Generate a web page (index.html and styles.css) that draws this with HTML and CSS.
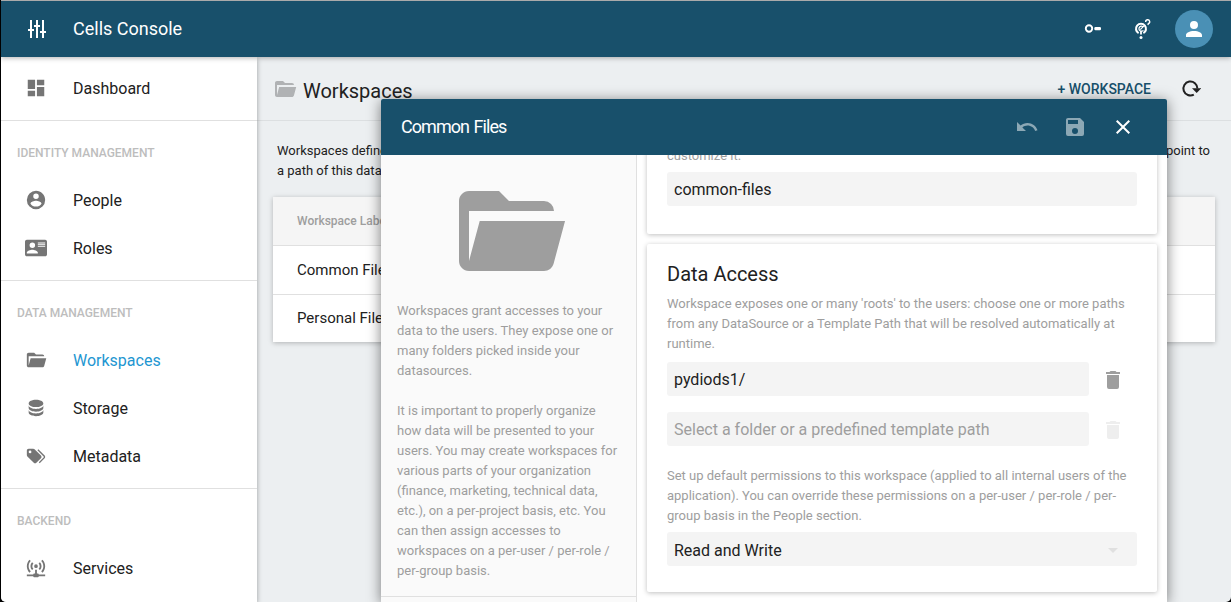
FILE: index.html
```html
<!DOCTYPE html>
<html lang="en">
<head>
<meta charset="utf-8">
<title>Cells Console</title>
<link rel="stylesheet" href="styles.css">
</head>
<body>
<svg class="defs" aria-hidden="true">
  <symbol id="folder" viewBox="0 0 24 24"><path d="M19,20H4C2.89,20 2,19.1 2,18V6C2,4.89 2.89,4 4,4H10L12,6H19A2,2 0 0,1 21,8H21L4,8V18L6.14,10H23.21L20.93,18.5C20.7,19.37 19.92,20 19,20Z"/></symbol>
  <symbol id="trash" viewBox="0 0 24 24"><path d="M19,4H15.5L14.5,3H9.5L8.5,4H5V6H19M6,19A2,2 0 0,0 8,21H16A2,2 0 0,0 18,19V7H6V19Z"/></symbol>
</svg>
<div class="window">
  <header class="topbar">
    <svg class="icon tune" viewBox="0 0 24 24"><path d="M5,3V12H3V14H5V21H7V14H9V12H7V3M11,3V8H9V10H11V21H13V10H15V8H13V3M17,3V14H15V16H17V21H19V16H21V14H19V3"/></svg>
    <span class="brand">Cells Console</span>
    <svg class="icon key" viewBox="0 0 18 18"><circle cx="5" cy="8.5" r="3.2" fill="none" stroke="#fff" stroke-width="1.9"/><rect x="10.3" y="7" width="6.7" height="3.2" rx="1.2"/></svg>
    <svg class="icon compass" viewBox="0 0 18 22"><g fill="none" stroke="#fff"><path d="M5.6 15.2A5 5 0 1 1 10.4 15.2" stroke-width="2.1"/><path d="M10.2 8.9A2.5 2.5 0 1 0 10.4 12.3M7.3 11.6L11 7.8" stroke-width="1.2"/><path d="M8 13V16.6" stroke-width="1.8"/><path d="M12.7 4A2 2 0 1 1 15.4 5.6L14.8 6.9" stroke-width="1.4"/></g><circle cx="8" cy="19.4" r="1.5"/></svg>
    <span class="avatar"><svg class="icon" viewBox="0 0 24 24"><path d="M12,4A4,4 0 0,1 16,8A4,4 0 0,1 12,12A4,4 0 0,1 8,8A4,4 0 0,1 12,4M12,14C16.42,14 20,15.79 20,18V20H4V18C4,15.79 7.58,14 12,14Z"/></svg></span>
  </header>
  <div class="body">
    <nav class="sidebar">
      <div class="group">
        <a class="item"><svg class="icon" viewBox="0 0 24 24"><path d="M13,3V9H21V3M13,21H21V11H13M3,21H11V15H3M3,13H11V3H3V13Z"/></svg><span>Dashboard</span></a>
      </div>
      <div class="group">
        <h2 class="label">IDENTITY MANAGEMENT</h2>
        <a class="item"><svg class="icon" viewBox="0 0 24 24"><path d="M12,19.2C9.5,19.2 7.29,17.92 6,16C6.03,14 10,12.9 12,12.9C14,12.9 17.97,14 18,16C16.71,17.92 14.5,19.2 12,19.2M12,5A3,3 0 0,1 15,8A3,3 0 0,1 12,11A3,3 0 0,1 9,8A3,3 0 0,1 12,5M12,2A10,10 0 0,0 2,12A10,10 0 0,0 12,22A10,10 0 0,0 22,12C22,6.47 17.5,2 12,2Z"/></svg><span>People</span></a>
        <a class="item"><svg class="icon" viewBox="0 0 24 24"><path fill-rule="evenodd" d="M22,3H2C0.91,3.04 0.04,3.91 0,5V19C0.04,20.09 0.91,20.96 2,21H22C23.09,20.96 23.96,20.09 24,19V5C23.96,3.91 23.09,3.04 22,3ZM8,6A3,3 0 0,1 11,9A3,3 0 0,1 8,12A3,3 0 0,1 5,9A3,3 0 0,1 8,6ZM14,18H2V17C2,15 6,13.9 8,13.9C10,13.9 14,15 14,17V18ZM22,7V6H14V7ZM22,9V8H14V9ZM22,11V10H14V11Z"/></svg><span>Roles</span></a>
      </div>
      <div class="group">
        <h2 class="label">DATA MANAGEMENT</h2>
        <a class="item active"><svg class="icon"><use href="#folder"/></svg><span>Workspaces</span></a>
        <a class="item"><svg class="icon" viewBox="0 0 24 24"><path d="M12,3C7.58,3 4,4.79 4,7C4,9.21 7.58,11 12,11C16.42,11 20,9.21 20,7C20,4.79 16.42,3 12,3M4,9V12C4,14.21 7.58,16 12,16C16.42,16 20,14.21 20,12V9C20,11.21 16.42,13 12,13C7.58,13 4,11.21 4,9M4,14V17C4,19.21 7.58,21 12,21C16.42,21 20,19.21 20,17V14C20,16.21 16.42,18 12,18C7.58,18 4,16.21 4,14Z"/></svg><span>Storage</span></a>
        <a class="item"><svg class="icon" viewBox="0 0 24 24"><path d="M5.5,9A1.5,1.5 0 0,0 7,7.5A1.5,1.5 0 0,0 5.5,6A1.5,1.5 0 0,0 4,7.5A1.5,1.5 0 0,0 5.5,9M17.41,11.58C17.77,11.94 18,12.44 18,13C18,13.55 17.78,14.05 17.41,14.41L12.41,19.41C12.05,19.77 11.55,20 11,20C10.45,20 9.95,19.78 9.58,19.41L2.59,12.42C2.22,12.05 2,11.55 2,11V6C2,4.89 2.89,4 4,4H9C9.55,4 10.05,4.22 10.41,4.58L17.41,11.58M13.54,5.71L14.54,4.71L21.41,11.58C21.78,11.94 22,12.45 22,13C22,13.55 21.78,14.05 21.42,14.41L16.04,19.79L15.04,18.79L20.75,13L13.54,5.71Z"/></svg><span>Metadata</span></a>
      </div>
      <div class="group">
        <h2 class="label">BACKEND</h2>
        <a class="item"><svg class="icon" viewBox="0 0 24 24"><path d="M4.93,2.93C3.12,4.74 2,7.24 2,10C2,12.76 3.12,15.26 4.93,17.07L6.34,15.66C4.89,14.22 4,12.22 4,10C4,7.79 4.89,5.78 6.34,4.34L4.93,2.93M19.07,2.93L17.66,4.34C19.11,5.78 20,7.79 20,10C20,12.22 19.11,14.22 17.66,15.66L19.07,17.07C20.88,15.26 22,12.76 22,10C22,7.24 20.88,4.74 19.07,2.93M7.76,5.76C6.67,6.85 6,8.35 6,10C6,11.65 6.67,13.15 7.76,14.24L9.17,12.83C8.45,12.11 8,11.11 8,10C8,8.89 8.45,7.89 9.17,7.17L7.76,5.76M16.24,5.76L14.83,7.17C15.55,7.89 16,8.89 16,10C16,11.11 15.55,12.11 14.83,12.83L16.24,14.24C17.33,13.15 18,11.65 18,10C18,8.35 17.33,6.85 16.24,5.76M12,8A2,2 0 0,0 10,10A2,2 0 0,0 12,12A2,2 0 0,0 14,10A2,2 0 0,0 12,8M11,14V18H10A1,1 0 0,0 9,19H2V21H9A1,1 0 0,0 10,22H14A1,1 0 0,0 15,21H22V19H15A1,1 0 0,0 14,18H13V14H11Z"/></svg><span>Services</span></a>
      </div>
    </nav>
    <main class="main">
      <div class="page-head">
        <svg class="icon head-folder"><use href="#folder"/></svg>
        <h1 class="page-title">Workspaces</h1>
        <span class="add">+ WORKSPACE</span>
        <svg class="icon reload" viewBox="0 0 20 20"><path d="M12.8 15.6A7 7 0 1 1 16.4 9.5" fill="none" stroke="#212121" stroke-width="2"/><path d="M11 9.2H20.4L15.7 14Z"/></svg>
      </div>
      <div class="intro"><div>Workspaces define</div><div class="intro-end">point to</div><div>a path of this datasource.</div></div>
      <div class="table">
        <div class="row head">Workspace Label</div>
        <div class="row">Common Files</div>
        <div class="row">Personal Files</div>
      </div>
    </main>
  </div>
  <section class="dialog">
    <header class="dialog-bar">
      <h2 class="dialog-title">Common Files</h2>
      <svg class="icon dim" viewBox="0 0 24 24"><path d="M12.5,8C9.85,8 7.45,9 5.6,10.6L2,7V16H11L7.38,12.38C8.77,11.22 10.54,10.5 12.5,10.5C16.04,10.5 19.1,12.81 20.14,16L22.5,15.22C21.12,11.03 17.15,8 12.5,8Z"/></svg>
      <svg class="icon dim" viewBox="0 0 24 24"><path d="M15,9H5V5H15M12,19A3,3 0 0,1 9,16A3,3 0 0,1 12,13A3,3 0 0,1 15,16A3,3 0 0,1 12,19M17,3H5C3.89,3 3,3.9 3,5V19A2,2 0 0,0 5,21H19A2,2 0 0,0 21,19V7L17,3Z"/></svg>
      <svg class="icon" viewBox="0 0 24 24"><path d="M19,6.41L17.59,5L12,10.59L6.41,5L5,6.41L10.59,12L5,17.59L6.41,19L12,13.41L17.59,19L19,17.59L13.41,12L19,6.41Z"/></svg>
    </header>
    <div class="dialog-body">
      <aside class="info">
        <svg class="icon big"><use href="#folder"/></svg>
        <div class="info-text">
          <p>Workspaces grant accesses to your<br>data to the users. They expose one or<br>many folders picked inside your<br>datasources.</p>
          <p>It is important to properly organize<br>how data will be presented to your<br>users. You may create workspaces for<br>various parts of your organization<br>(finance, marketing, technical data,<br>etc.), on a per-project basis, etc. You<br>can then assign accesses to<br>workspaces on a per-user / per-role /<br>per-group basis.</p>
        </div>
      </aside>
      <div class="form">
        <div class="card first">
          <p class="hint">customize it.</p>
          <div class="field">common-files</div>
        </div>
        <div class="card">
          <h3 class="card-title">Data Access</h3>
          <p class="hint">Workspace exposes one or many 'roots' to the users: choose one or more paths<br>from any DataSource or a Template Path that will be resolved automatically at<br>runtime.</p>
          <div class="line"><div class="field">pydiods1/</div><svg class="icon trash"><use href="#trash"/></svg></div>
          <div class="line"><div class="field empty">Select a folder or a predefined template path</div><svg class="icon trash off"><use href="#trash"/></svg></div>
          <p class="hint perms">Set up default permissions to this workspace (applied to all internal users of the<br>application). You can override these permissions on a per-user / per-role / per-<br>group basis in the People section.</p>
          <div class="field select"><span>Read and Write</span><svg class="icon caret" viewBox="0 0 24 24"><path d="M7,10L12,15L17,10Z"/></svg></div>
        </div>
      </div>
    </div>
  </section>
</div>
</body>
</html>
```
FILE: styles.css
```css
* { box-sizing: border-box; }
body { margin: 0; background: #000; font-family: Roboto, sans-serif; color: #212121; overflow: hidden; }
h1, h2, h3, p { margin: 0; font-weight: 400; }
.defs { position: absolute; width: 0; height: 0; }
.icon { display: block; flex: none; width: 24px; height: 24px; fill: currentColor; }

.window { position: relative; display: flex; flex-direction: column; width: 1230px; height: 602px; margin-left: 1px; border-top: 1px solid #aaa; border-radius: 0 0 5px 5px; background: #eceff1; overflow: hidden; }
.topbar { position: relative; z-index: 1; display: flex; align-items: center; flex: none; height: 56px; padding: 0 18px 0 24px; background: #18506b; color: #fff; box-shadow: 0 1px 5px rgba(0, 0, 0, .3); }
.brand { flex: 1; margin-left: 24px; padding-bottom: 2px; font-size: 18px; }
.key { width: 18px; height: 18px; margin-right: 31px; }
.compass { width: 18px; height: 22px; margin-right: 24px; }
.avatar { display: flex; align-items: center; justify-content: center; width: 38px; height: 38px; border-radius: 50%; background: #4a90b5; }
.avatar .icon { width: 24px; height: 24px; }

.body { display: flex; flex: 1; min-height: 0; }
.sidebar { position: relative; flex: none; width: 256px; background: #fff; box-shadow: 0 2px 5px rgba(0, 0, 0, .35); overflow: hidden; }
.group { padding: 7px 0 8px; }
.group + .group { border-top: 1px solid #e0e0e0; }
.label { padding-left: 16px; font-size: 12px; font-weight: 500; line-height: 51px; height: 48px; color: #bdbdbd; }
.item { display: flex; align-items: center; height: 48px; padding-left: 24px; font-size: 16px; }
.item .icon { width: 22px; height: 22px; margin-right: 26px; color: #757575; }
.active { color: #1e96d1; }

.main { flex: 1; min-width: 0; }
.page-head { display: flex; align-items: center; height: 64px; padding: 0 30px 0 16px; border-bottom: 1px solid #dcdfe1; }
.head-folder { color: #b0b2b4; margin-right: 6px; }
.page-title { flex: 1; padding-top: 5px; font-size: 20px; }
.add { margin-right: 30px; padding-top: 1px; font-size: 14px; font-weight: 500; color: #18506b; }
.reload { width: 20px; height: 20px; }
.intro { display: grid; grid-template-columns: 1fr auto; padding: 20px 21px 16px 20px; font-size: 13px; line-height: 20px; }
.table { margin: 0 16px; background: #fff; box-shadow: 0 1px 5px rgba(0, 0, 0, .25); }
.row { height: 47px; padding-left: 24px; font-size: 15px; line-height: 47px; }
.row.head { height: 49px; border-bottom: 1px solid #e0e0e0; background: #f5f5f5; font-size: 12px; font-weight: 500; line-height: 49px; color: #9e9e9e; }
.row.head + .row { height: 49px; line-height: 49px; border-bottom: 1px solid #e0e0e0; }

.dialog { position: absolute; z-index: 2; left: 380px; top: 98px; display: flex; flex-direction: column; width: 786px; height: 503px; border-radius: 2px 2px 0 0; background: #fff; box-shadow: 0 2px 14px rgba(0, 0, 0, .5); overflow: hidden; }
.dialog-bar { display: flex; align-items: center; gap: 24px; flex: none; height: 56px; padding: 0 32px 0 20px; background: #18506b; color: #fff; }
.dialog-title { flex: 1; padding-bottom: 2px; font-size: 18px; letter-spacing: -.95px; word-spacing: 1px; }
.dim { opacity: .5; }
.dialog-body { display: flex; flex: 1; min-height: 0; }
.info { flex: none; width: 256px; border-right: 1px solid #e0e0e0; background: #fafafa; }
.big { width: 120px; height: 120px; margin: 16px auto 0 67.5px; color: #9e9e9e; }
.info-text { display: flex; flex-direction: column; gap: 20px; margin-top: 10px; padding: 0 0 15px 16px; border-bottom: 1px solid #e0e0e0; font-size: 13px; line-height: 20px; color: #9e9e9e; white-space: nowrap; }
.form { flex: 1; display: flex; flex-direction: column; gap: 10px; padding: 0 10px; overflow: hidden; }
.card { flex: none; height: 348px; padding: 20px; border-radius: 2px; box-shadow: 0 1px 5px rgba(0, 0, 0, .25); background: #fff; }
.card.first { height: 99px; margin-top: -20px; padding-top: 11px; }
.card.first .hint { margin-bottom: 6px; }
.card-title { font-size: 20px; line-height: 20px; margin-bottom: 10px; }
.hint { margin-bottom: 8px; font-size: 13px; line-height: 20px; color: #9e9e9e; white-space: nowrap; }
.field { flex: 1; height: 34px; padding: 0 7px; border-radius: 3px; background: #f4f4f4; font-size: 16px; line-height: 35px; }
.line { display: flex; align-items: center; gap: 12px; height: 34px; margin-bottom: 16px; padding-right: 12px; }
.empty { color: #9e9e9e; }
.trash { margin-top: 2px; color: #9e9e9e; }
.off { color: #eee; }
.perms { padding-top: 4px; margin-bottom: 6px; }
.select { display: flex; justify-content: space-between; align-items: center; padding-right: 12px; line-height: 37px; }
.select span { padding-top: 2px; }
.caret { margin-top: 2px; color: #e0e0e0; }
```
